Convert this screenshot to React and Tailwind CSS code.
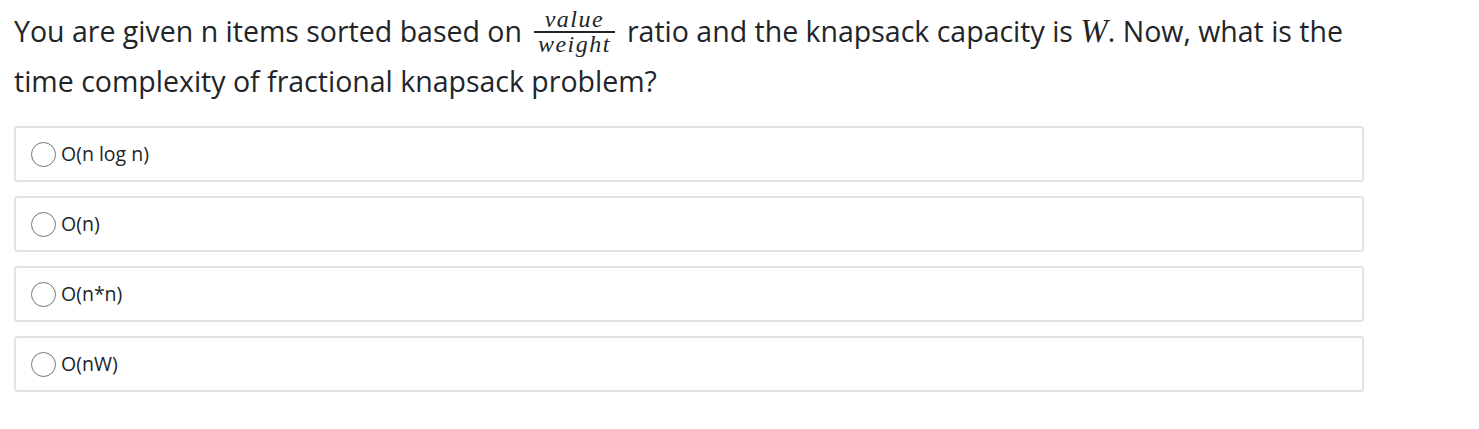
import { useState } from "react"

const OPTIONS = ["O(n log n)", "O(n)", "O(n*n)", "O(nW)"]

function Fraction() {
  return (
    <span className="mx-[12px] inline-flex flex-col items-center align-[15px] font-['Liberation_Serif',serif] italic">
      <span className="px-[4px] pb-[2px] text-[24px] leading-[20px] tracking-[1.5px]">value</span>
      <span className="h-[2px] w-full bg-[#212529]" />
      <span className="-mb-[22px] px-[4px] pt-[1px] text-[24px] leading-[20px] tracking-[1.5px]">weight</span>
    </span>
  )
}

export default function App() {
  const [picked, setPicked] = useState(null)

  return (
    <div className="min-h-[429px] w-[1479px] bg-white px-[14px] pt-[6px] font-['Open_Sans','Noto_Sans',sans-serif] text-[#212529]">
      <p className="text-[28.5px] leading-[50px]">
        You are given n items sorted based on
        <Fraction />
        ratio and the knapsack capacity is{" "}
        <span className="font-['Liberation_Serif',serif] text-[33px] italic">W</span>. Now, what is the
        <br />
        time complexity of fractional knapsack problem?
      </p>

      <div className="mt-[20px] flex w-[1350px] flex-col gap-[14px]">
        {OPTIONS.map((opt, i) => (
          <label
            key={opt}
            className="flex h-[56px] cursor-pointer items-center gap-[5px] rounded-[3px] border-2 border-[#e3e3e3] px-[15px]"
            onClick={() => setPicked(i)}
          >
            <span className="flex h-[25px] w-[25px] items-center justify-center rounded-full border-[1.5px] border-[#767676]">
              {picked === i && <span className="h-[13px] w-[13px] rounded-full bg-[#0075ff]" />}
            </span>
            <span className="text-[19.5px] text-[#212529]">{opt}</span>
          </label>
        ))}
      </div>
    </div>
  )
}
